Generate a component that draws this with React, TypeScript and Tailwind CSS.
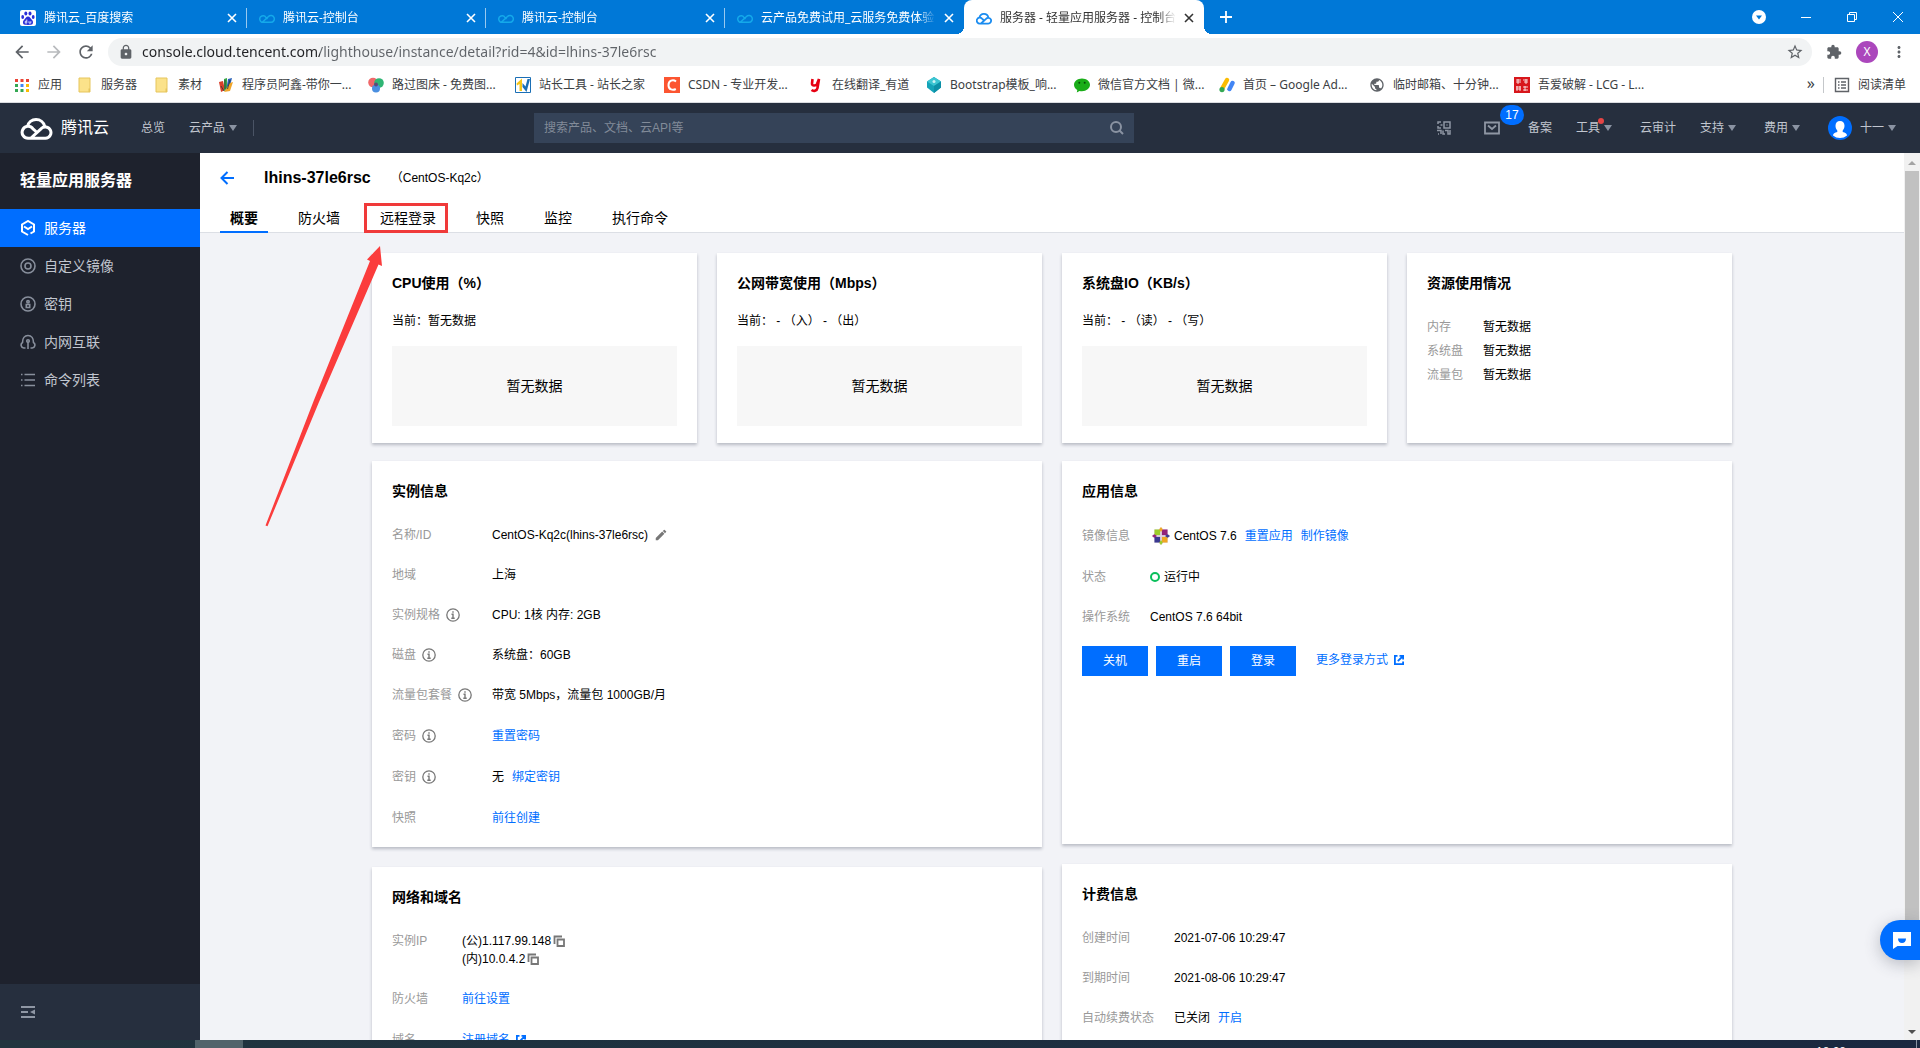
import type { ReactNode } from 'react'
import {
  MdArrowBack,
  MdArrowForward,
  MdEdit,
  MdExtension,
  MdLock,
  MdMoreVert,
  MdPublic,
  MdRefresh,
  MdStarBorder,
} from 'react-icons/md'

/* ---------- icons ---------- */

function CloudLogo({ className }: { className?: string }) {
  return (
    <svg viewBox="0 0 33 24" fill="none" stroke="currentColor" strokeWidth="3" className={className}>
      <path d="M16 15.5l-3-2.7A6 6 0 1 0 8.500 22.300H25.500A5.700 5.700 0 1 0 21 12.800L11 22" strokeLinejoin="round" />
      <path d="M7.500 10.500A8.800 8.800 0 0 1 24.700 10.300" />
    </svg>
  )
}

// same mark, but drawn for a square favicon
function CloudFavicon() {
  return (
    <svg viewBox="0 0 16 16" className="size-4 shrink-0" fill="none" stroke="#1a8cf0" strokeWidth="1.800">
      <path d="M7.500 10L6 8.600A3 3 0 1 0 4 13.600h8.200A2.900 2.900 0 1 0 10 8.800L5 13.500" strokeLinejoin="round" />
      <path d="M3.500 7.500A4.500 4.500 0 0 1 12.300 7.300" />
    </svg>
  )
}

function InfinityIcon() {
  return (
    <svg viewBox="0 0 16 16" className="size-4 shrink-0" fill="none" stroke="#14a9ea" strokeWidth="1.500">
      <path d="M3 12.500L9.500 6.500A3.400 3.400 0 1 1 12 12.300H4.500A3.300 3.300 0 1 1 7 7.500L8.500 9" />
    </svg>
  )
}

function BaiduIcon() {
  return (
    <svg viewBox="0 0 16 16" className="size-4 shrink-0">
      <rect width="16" height="16" rx="2" fill="#fff" />
      <g fill="#2b2fd8">
        <ellipse cx="5.800" cy="3.500" rx="1.500" ry="2" />
        <ellipse cx="10" cy="3.500" rx="1.500" ry="2" />
        <ellipse cx="2.700" cy="7" rx="1.400" ry="1.900" />
        <ellipse cx="13.200" cy="7" rx="1.400" ry="1.900" />
        <path d="M8 6.500c-2 0-2.500 2-4 3.500s-1.500 4.500 1 4.800c1.500.2 4.500.2 6 0 2.500-.3 2.500-3.300 1-4.800S10 6.500 8 6.500z" />
      </g>
      <path d="M6.800 9.500v3.600M6.800 11.200H5.300v1.900h1.500M9 11.200v1.900h1.800v-1.900" stroke="#fff" strokeWidth=".8" fill="none" />
    </svg>
  )
}

function CloseIcon({ className }: { className?: string }) {
  return (
    <svg viewBox="0 0 10 10" className={className} stroke="currentColor" strokeWidth="1.600">
      <path d="M1 1l8 8M9 1L1 9" />
    </svg>
  )
}

function InfoIcon() {
  return (
    <svg viewBox="0 0 14 14" className="size-3.5 shrink-0" fill="none" stroke="#777" strokeWidth="1.300">
      <circle cx="7" cy="7" r="6.200" />
      <path d="M7 3.200v1.600M5.500 6.200H7v4M5.300 10.300h3.400" strokeWidth="1.400" />
    </svg>
  )
}

function CopyIcon() {
  return (
    <svg viewBox="0 0 12 12" className="size-3" fill="none" stroke="#777" strokeWidth="1.800">
      <path d="M1.500 9V1.500H9" />
      <path d="M4.500 4.500h6.500v6.500H4.500z" />
    </svg>
  )
}

function ExternalIcon() {
  return (
    <svg viewBox="0 0 10 10" className="size-2.5" fill="none" stroke="currentColor" strokeWidth="1.800">
      <path d="M3.500 .9H.9v8.200h8.200V6.500" />
      <path d="M3.800 6.200L8.500 1.500M5.500.9h3.600v3.600" />
    </svg>
  )
}

function CentosIcon() {
  return (
    <svg viewBox="0 0 16 16" className="size-[18px]">
      <path d="M8 0l2.200 2.200H14v3.600L16 8l-2 2.200V14h-3.800L8 16l-2.200-2H2v-3.800L0 8l2-2.200V2.200h3.800z" fill="#e2d3e2" />
      <path d="M2.200 2.200h5v5h-5z" fill="#9ccd2a" />
      <path d="M8.800 2.200h5v5h-5z" fill="#932279" />
      <path d="M2.200 8.800h5v5h-5z" fill="#3a3990" />
      <path d="M8.800 8.800h5v5h-5z" fill="#efa724" />
      <path d="M8 0l1.600 2.200L8 4.500 6.400 2.200z" fill="#efa724" />
      <path d="M16 8l-2.200 1.600L11.500 8l2.300-1.600z" fill="#3a3990" />
      <path d="M0 8l2.200-1.600L4.500 8 2.200 9.600z" fill="#932279" />
      <path d="M8 16l-1.600-2.200L8 11.500l1.600 2.300z" fill="#9ccd2a" />
    </svg>
  )
}

function Caret() {
  return (
    <svg viewBox="0 0 8 6" className="w-2 h-1.5" fill="#8a93a2">
      <path d="M0 0h8L4 6z" />
    </svg>
  )
}

function FolderIcon() {
  return (
    <svg viewBox="0 0 16 16" className="size-4">
      <path d="M2 1h11v14H2z" fill="#fbe28a" stroke="#e6c55c" />
      <path d="M11.500 11.500v3.500H13v-3.500z" fill="#e6c55c" />
    </svg>
  )
}

/* ---------- browser chrome ---------- */

const TABS = [
  { title: '腾讯云_百度搜索', icon: <BaiduIcon /> },
  { title: '腾讯云-控制台', icon: <InfinityIcon /> },
  { title: '腾讯云-控制台', icon: <InfinityIcon /> },
  { title: '云产品免费试用_云服务免费体验', icon: <InfinityIcon /> },
]

const BOOKMARKS: { label: string; width: string; icon: ReactNode }[] = [
  {
    label: '应用',
    width: 'w-[63px]',
    icon: (
      <svg viewBox="0 0 16 16" className="size-4">
        <path d="M1 2h3v3H1zM6.500 2h3v3h-3zM12 2h3v3h-3z" fill="#ea4335" />
        <path d="M1 7h3v3H1z" fill="#34a853" />
        <path d="M6.500 7h3v3h-3z" fill="#4285f4" />
        <path d="M12 7h3v3h-3z" fill="#fbbc05" />
        <path d="M1 12h3v3H1zM6.500 12h3v3h-3z" fill="#34a853" />
        <path d="M12 12h3v3h-3z" fill="#fbbc05" />
      </svg>
    ),
  },
  { label: '服务器', width: 'w-[77px]', icon: <FolderIcon /> },
  { label: '素材', width: 'w-16', icon: <FolderIcon /> },
  {
    label: '程序员阿鑫-带你一...',
    width: 'w-[150px]',
    icon: (
      <svg viewBox="0 0 16 16" className="size-4">
        <path d="M1 5l4-1 2 9-4 2z" fill="#d9402b" />
        <path d="M6 2l3-1v11l-3 2z" fill="#3aa648" />
        <path d="M10 2l4-1-3 12-3 1z" fill="#2a62b8" />
        <path d="M12 6l3-1-3 9-6 1z" fill="#f0a52a" />
        <path d="M3 9l3 5M7 3v9M12 3L9.500 12" stroke="#333" strokeWidth=".8" />
      </svg>
    ),
  },
  {
    label: '路过图床 - 免费图...',
    width: 'w-[147px]',
    icon: (
      <svg viewBox="0 0 16 16" className="size-4">
        <circle cx="5" cy="5.500" r="4.800" fill="#f0686a" />
        <circle cx="11" cy="6" r="4.800" fill="#2fb574" />
        <circle cx="8" cy="11.500" r="4" fill="#4a8fe0" />
        <circle cx="8" cy="7.500" r="2" fill="#5b4a7a" />
      </svg>
    ),
  },
  {
    label: '站长工具 - 站长之家',
    width: 'w-[149px]',
    icon: (
      <svg viewBox="0 0 16 16" className="size-4">
        <path d="M.5.500h15v15H.5z" fill="#fff" stroke="#1b6fb5" />
        <path d="M1.500 6.500L7 1.500v12.500H4.500V7L2 8.500z" fill="#f5c518" />
        <path d="M7.500 6l3 3.500L12.500 2h2.500L11.500 15 7.500 10z" fill="#1b6fb5" />
      </svg>
    ),
  },
  {
    label: 'CSDN - 专业开发...',
    width: 'w-36',
    icon: (
      <svg viewBox="0 0 16 16" className="size-4">
        <path d="M0 0h16v16H0z" fill="#fc5531" />
        <path d="M12 4.500C9 2 4.500 3.500 4.500 8.200S9 13.500 11.800 12" stroke="#fff" strokeWidth="2" fill="none" />
      </svg>
    ),
  },
  {
    label: '在线翻译_有道',
    width: 'w-[118px]',
    icon: (
      <svg viewBox="0 0 16 16" className="size-4" fill="none" stroke="#e60012" strokeWidth="2.600">
        <path d="M4.500 2L4 6.500c-.3 2.500 4 2.500 5 .5L11 2 9.500 11c-.5 3-4 3.500-6 2" />
      </svg>
    ),
  },
  {
    label: 'Bootstrap模板_响...',
    width: 'w-[148px]',
    icon: (
      <svg viewBox="0 0 16 16" className="size-4">
        <path d="M8 0l7 4.500v6L8 16l-7-5.500v-6z" fill="#14a3b8" />
        <path d="M8 0l7 4.500L8 9 1 4.500z" fill="#3cc5d2" />
        <path d="M8 9l7-4.500v6L8 16z" fill="#0c8fa6" />
        <circle cx="8" cy="4.500" r="1.500" fill="#c9f2f5" />
      </svg>
    ),
  },
  {
    label: '微信官方文档 | 微...',
    width: 'w-[145px]',
    icon: (
      <svg viewBox="0 0 16 16" className="size-4">
        <path d="M8 1.500c4.400 0 8 2.800 8 6.300s-3.600 6.400-8 6.400c-.8 0-1.700-.1-2.500-.3L2.800 15.500l.5-2.500C1.300 11.800 0 10 0 7.800 0 4.300 3.600 1.500 8 1.500z" fill="#1aad19" />
        <circle cx="5.300" cy="5.800" r="1" fill="#064d06" />
        <circle cx="10.700" cy="5.800" r="1" fill="#064d06" />
      </svg>
    ),
  },
  {
    label: '首页 – Google Ad...',
    width: 'w-[150px]',
    icon: (
      <svg viewBox="0 0 16 16" className="size-4" strokeLinecap="round" strokeWidth="4.400">
        <path d="M8 3L3.500 11" stroke="#fbbc04" />
        <path d="M13.500 6L10.500 12" stroke="#4285f4" />
        <circle cx="3" cy="12.600" r="2.600" fill="#34a853" />
      </svg>
    ),
  },
  { label: '临时邮箱、十分钟...', width: 'w-[145px]', icon: <MdPublic className="size-4 text-[#5f6368]" /> },
  {
    label: '吾爱破解 - LCG - L...',
    width: 'w-[150px]',
    icon: (
      <svg viewBox="0 0 16 16" className="size-4">
        <path d="M0 0h16v16H0z" fill="#d8161b" />
        <path d="M2 3h5M2 5h5M4 2v5M9 3h5M10 5h4M12 2v5M2 10h5M2 12h5M3 9v5M6 9v5M9 10h5M9 13h5M11 9v5" stroke="#fff" strokeWidth=".8" />
      </svg>
    ),
  },
]

function TabStrip() {
  return (
    <div className="flex h-[34px] items-center bg-[#0078d7] pl-2 text-xs text-white">
      {TABS.map((tab, i) => (
        <div key={i} className="relative flex h-full w-[239px] items-center gap-2 pl-3 pr-2.5 pt-0.5">
          {tab.icon}
          <span className="flex-1 overflow-hidden whitespace-nowrap mask-r-from-90%">{tab.title}</span>
          <button aria-label="关闭标签页">
            <CloseIcon className="size-2.5" />
          </button>
          {i < 3 && <span className="absolute right-0 top-2 h-5 w-px bg-white/60" />}
        </div>
      ))}
      <div className="relative flex h-full w-60 items-center gap-2 rounded-t-lg bg-white pl-3 pr-2.5 pt-0.5 text-[#333]">
        <span className="absolute -left-2 bottom-0 size-2 bg-[radial-gradient(circle_at_0_0,transparent_8px,white_8px)]" />
        <span className="absolute -right-2 bottom-0 size-2 bg-[radial-gradient(circle_at_100%_0,transparent_8px,white_8px)]" />
        <CloudFavicon />
        <span className="flex-1 overflow-hidden whitespace-nowrap mask-r-from-90%">服务器 - 轻量应用服务器 - 控制台</span>
        <button aria-label="关闭标签页">
          <CloseIcon className="size-2.5" />
        </button>
      </div>
      <button aria-label="新标签页" className="ml-4">
        <svg viewBox="0 0 12 12" className="size-3" stroke="white" strokeWidth="1.800">
          <path d="M6 0v12M0 6h12" />
        </svg>
      </button>
      <div className="ml-auto flex h-7 items-center gap-[34px] pr-4">
        <button aria-label="搜索标签页">
          <svg viewBox="0 0 14 14" className="size-3.5" fill="none">
            <circle cx="7" cy="7" r="7" fill="#fff" />
            <path d="M4 5.500h6L7 9.500z" fill="#0078d7" />
          </svg>
        </button>
        <button aria-label="最小化">
          <svg viewBox="0 0 12 12" className="size-3" stroke="white">
            <path d="M1 6.500h10" />
          </svg>
        </button>
        <button aria-label="还原">
          <svg viewBox="0 0 12 12" className="size-3" stroke="white" fill="none">
            <path d="M1.500 3.500h7v7h-7zM3.500 3.500v-2h7v7h-2" />
          </svg>
        </button>
        <button aria-label="关闭">
          <svg viewBox="0 0 12 12" className="size-3" stroke="white">
            <path d="M1 1l10 10M11 1L1 11" />
          </svg>
        </button>
      </div>
    </div>
  )
}

function AddressBar() {
  return (
    <div className="flex h-9 items-center bg-white px-3 text-[#5f6368]">
      <button aria-label="后退" className="mr-3">
        <MdArrowBack className="size-5" />
      </button>
      <button aria-label="前进" className="mr-3 text-[#b8babd]">
        <MdArrowForward className="size-5" />
      </button>
      <button aria-label="刷新" className="mr-3">
        <MdRefresh className="size-5" />
      </button>
      <div className="flex h-7 flex-1 items-center gap-2 rounded-full bg-[#f1f3f4] pl-2.5 pr-2">
        <MdLock className="size-4" />
        <input
          aria-label="地址"
          readOnly
          value="console.cloud.tencent.com/lighthouse/instance/detail?rid=4&id=lhins-37le6rsc"
          className="flex-1 bg-[linear-gradient(90deg,#202124_178px,#5f6368_178px)] bg-clip-text text-sm text-transparent outline-none"
        />
        <button aria-label="收藏">
          <MdStarBorder className="size-[18px]" />
        </button>
      </div>
      <button aria-label="扩展程序" className="ml-3.5">
        <MdExtension className="size-4" />
      </button>
      <button className="ml-3.5 size-[22px] rounded-full bg-[#ab47bc] text-xs text-white">X</button>
      <button aria-label="菜单" className="ml-3">
        <MdMoreVert className="size-[18px]" />
      </button>
    </div>
  )
}

function BookmarksBar() {
  return (
    <div className="flex h-[33px] items-center border-b border-[#dadce0] bg-white pl-3.5 pb-0.5 text-xs text-[#3c4043]">
      {BOOKMARKS.map((b) => (
        <a key={b.label} href="#" className={`flex shrink-0 items-center gap-2 whitespace-nowrap ${b.width}`}>
          <span className="shrink-0">{b.icon}</span>
          {b.label}
        </a>
      ))}
      <div className="ml-auto flex items-center pr-3.5">
        <button className="pb-1 text-base leading-4">»</button>
        <span className="ml-2 h-4 w-px bg-[#c4c7ca]" />
        <button className="ml-2.5 flex items-center gap-2">
          <svg viewBox="0 0 16 16" className="size-4" fill="none" stroke="#5f6368" strokeWidth="1.400">
            <path d="M1.500 1.500h13v13h-13zM4 5h1.500M4 8h1.500M4 11h1.500M7 5h5M7 8h5M7 11h5" />
          </svg>
          阅读清单
        </button>
      </div>
    </div>
  )
}

/* ---------- console ---------- */

function ConsoleHeader() {
  return (
    <header className="flex h-[50px] items-center bg-[#262f3e] pl-5 pr-6 text-xs text-[#c1c6cf]">
      <CloudLogo className="w-[33px] h-6 text-white" />
      <span className="ml-2 text-base text-white">腾讯云</span>
      <a href="#" className="ml-8">总览</a>
      <a href="#" className="ml-6 flex items-center gap-1">
        云产品
        <Caret />
      </a>
      <span className="ml-4 h-4 w-px bg-[#4a5465]" />
      <div className="ml-[280px] flex h-[30px] w-[600px] items-center bg-[#354358] px-2.5">
        <input
          aria-label="搜索"
          placeholder="搜索产品、文档、云API等"
          className="flex-1 bg-transparent outline-none placeholder:text-[#828b99]"
        />
        <button aria-label="搜索">
          <svg viewBox="0 0 14 14" className="size-3.5" fill="none" stroke="#8a93a2" strokeWidth="2">
            <circle cx="6" cy="6" r="5" />
            <path d="M9.500 9.500L13 13" />
          </svg>
        </button>
      </div>
      <div className="ml-auto flex items-center">
        <button aria-label="二维码">
          <svg viewBox="0 0 14 14" className="size-3.5" fill="none" stroke="#8f97a4" strokeWidth="1.500">
            <path d="M7 1h6v6H7zM9.500 4h1M1 3V1h3M1 5v2h3M3.500 4h2M0 9.500h4v3.500M1 13h1M6 9.500v3.500h2M8 9.500h3V13h2V9" />
          </svg>
        </button>
        <button aria-label="消息" className="relative ml-[33px]">
          <svg viewBox="0 0 16 14" className="w-4 h-3.5" fill="none" stroke="#8f97a4" strokeWidth="1.800">
            <path d="M1 1.500h14v11H1zM4 4.500L8 8l4-3.500" />
          </svg>
          <span className="absolute -top-4 left-4 flex h-5 w-6 items-center justify-center rounded-full bg-[#006eff] text-xs text-white">
            17
          </span>
        </button>
        <a href="#" className="ml-7">备案</a>
        <a href="#" className="relative ml-6 flex items-center gap-1">
          工具
          <Caret />
          <span className="absolute right-2 -top-0.5 size-1.5 rounded-full bg-[#e54545]" />
        </a>
        <a href="#" className="ml-7">云审计</a>
        <a href="#" className="ml-6 flex items-center gap-1">
          支持
          <Caret />
        </a>
        <a href="#" className="ml-7 flex items-center gap-1">
          费用
          <Caret />
        </a>
        <svg viewBox="0 0 24 24" className="ml-7 size-6">
          <circle cx="12" cy="12" r="12" fill="#006eff" />
          <path d="M12 5c2.800 0 4.500 2 4.500 4.800 0 2-.8 3.600-1.800 4.700v1.500c2.500.6 4.300 1.500 4.300 3.500a11 11 0 0 1-14 0c0-2 1.800-2.900 4.300-3.500v-1.500c-1-1.100-1.800-2.700-1.800-4.700C7.500 7 9.200 5 12 5z" fill="#fff" />
        </svg>
        <button className="ml-2 flex items-center gap-1">
          十一
          <Caret />
        </button>
      </div>
    </header>
  )
}

const NAV: { label: string; icon: ReactNode }[] = [
  {
    label: '服务器',
    icon: (
      <>
        <path d="M8 15l-6-3.500v-7L8 1l6 3.500v7L10.500 13.500" strokeWidth="2" />
        <path d="M4 6.500L8 9l4-2.500" strokeWidth="2" />
      </>
    ),
  },
  {
    label: '自定义镜像',
    icon: (
      <>
        <circle cx="8" cy="8" r="7" />
        <circle cx="8" cy="8" r="3" />
      </>
    ),
  },
  {
    label: '密钥',
    icon: (
      <>
        <circle cx="8" cy="8" r="7" />
        <circle cx="8" cy="5.800" r="1.200" />
        <path d="M6.300 8.500h3.400v3H6.300z" />
      </>
    ),
  },
  {
    label: '内网互联',
    icon: (
      <>
        <path d="M5.500 14H3.800A3 3 0 0 1 2.500 8.500C2.500 4.500 4.500 1.500 8 1.500s5.500 3 5.500 7A3 3 0 0 1 12.200 14H10.500" />
        <path d="M8 7.500V15" />
        <circle cx="8" cy="7" r="1.300" />
      </>
    ),
  },
  {
    label: '命令列表',
    icon: <path d="M1 2.500h1.500M1 8h1.500M1 13.500h1.500M4.500 2.500H15M4.500 8H15M4.500 13.500H15" />,
  },
]

function Sidebar() {
  return (
    <aside className="flex w-[200px] shrink-0 flex-col bg-[#1e222d] text-sm text-[#c1c6cf]">
      <h2 className="px-5 py-4 text-base leading-6 font-bold text-white">轻量应用服务器</h2>
      <nav>
        {NAV.map((item, i) => (
          <a
            key={item.label}
            href="#"
            className={`flex h-[38px] items-center gap-2 px-5 ${i === 0 ? 'bg-[#006eff] text-white' : ''}`}
          >
            <svg
              viewBox="0 0 16 16"
              className={`size-4 ${i === 0 ? 'text-white' : 'text-[#888f9c]'}`}
              fill="none"
              stroke="currentColor"
              strokeWidth="1.600"
            >
              {item.icon}
            </svg>
            {item.label}
          </a>
        ))}
      </nav>
      <div className="mt-auto flex h-14 items-center bg-[#262f3e] px-5">
        <button aria-label="收起菜单">
          <svg viewBox="0 0 16 14" className="w-4 h-3.5" fill="#8f97a4">
            <path d="M1 1h14v2H1zM1 6h7v2H1zM1 11h14v2H1zM15 4.500v5L10 7z" />
          </svg>
        </button>
      </div>
    </aside>
  )
}

function Card({ title, className = '', children }: { title: string; className?: string; children: ReactNode }) {
  return (
    <section className={`bg-white px-5 pt-5 shadow-[0_2px_3px_rgba(54,58,80,0.3)] ${className}`}>
      <h3 className="text-sm leading-5 font-bold text-black">{title}</h3>
      {children}
    </section>
  )
}

function Row({
  label,
  info,
  labelWidth,
  height = 'h-5',
  children,
}: {
  label: string
  info?: boolean
  labelWidth: string
  height?: string
  children: ReactNode
}) {
  return (
    <div className={`flex leading-5 ${height}`}>
      <dt className={`flex shrink-0 items-center gap-1.5 text-[#999] ${labelWidth}`}>
        {label}
        {info && <InfoIcon />}
      </dt>
      <dd className="flex items-center">{children}</dd>
    </div>
  )
}

function Link({ className = '', children }: { className?: string; children: ReactNode }) {
  return (
    <a href="#" className={`text-[#006eff] ${className}`}>
      {children}
    </a>
  )
}

const METRICS = [
  { title: 'CPU使用（%）', current: '当前：暂无数据' },
  { title: '公网带宽使用（Mbps）', current: '当前： - （入） - （出）' },
  { title: '系统盘IO（KB/s）', current: '当前： - （读） - （写）' },
]

const DETAIL_TABS = ['概要', '防火墙', '远程登录', '快照', '监控', '执行命令']

function DetailHeader() {
  return (
    <div className="h-20 border-b border-[#dcdfe5] bg-white px-5">
      <div className="flex h-12 items-center pt-0.5">
        <button aria-label="返回" className="text-[#006eff]">
          <svg viewBox="0 0 14 14" className="size-3.5" fill="none" stroke="currentColor" strokeWidth="2">
            <path d="M7.500 1L1.500 7l6 6M1.500 7H14" />
          </svg>
        </button>
        <h1 className="ml-[30px] text-base font-bold">lhins-37le6rsc</h1>
        <span className="ml-5 text-xs">（CentOS-Kq2c）</span>
      </div>
      <div className="flex h-8 gap-5 text-sm" role="tablist">
        {DETAIL_TABS.map((tab, i) => (
          <button
            key={tab}
            role="tab"
            aria-selected={i === 0}
            className={`relative border-b-2 px-2.5 pt-1 ${i === 0 ? 'border-[#006eff] font-bold' : 'border-transparent'}`}
          >
            {tab}
            {i === 2 && <span className="absolute -left-1.5 -right-0.5 top-0.5 -bottom-0.5 border-3 border-[#f03a3a]" />}
          </button>
        ))}
      </div>
    </div>
  )
}

function Overview() {
  return (
    <div className="mx-auto max-w-[1360px] pt-5 text-xs">
      <div className="grid grid-cols-4 gap-5">
        {METRICS.map((m) => (
          <Card key={m.title} title={m.title} className="h-[190px]">
            <p className="mt-[18px] leading-5 whitespace-pre">{m.current}</p>
            <div className="mt-[15px] flex h-20 items-center justify-center bg-[#f7f7f7] text-sm">暂无数据</div>
          </Card>
        ))}
        <Card title="资源使用情况" className="h-[190px]">
          <dl className="mt-6 space-y-1">
            {['内存', '系统盘', '流量包'].map((label) => (
              <Row key={label} label={label} labelWidth="w-14">
                暂无数据
              </Row>
            ))}
          </dl>
        </Card>
      </div>

      <div className="mt-[18px] grid grid-cols-2 items-start gap-5">
        <div className="space-y-5">
          <Card title="实例信息" className="pb-[19px]">
            <dl className="mt-6 space-y-5">
              <Row label="名称/ID" labelWidth="w-[100px]">
                CentOS-Kq2c(lhins-37le6rsc)
                <button aria-label="编辑名称" className="ml-1.5">
                  <MdEdit className="size-3.5 text-[#777]" />
                </button>
              </Row>
              <Row label="地域" labelWidth="w-[100px]">上海</Row>
              <Row label="实例规格" info labelWidth="w-[100px]">CPU: 1核 内存: 2GB</Row>
              <Row label="磁盘" info labelWidth="w-[100px]">系统盘：60GB</Row>
              <Row label="流量包套餐" info labelWidth="w-[100px]">带宽 5Mbps，流量包 1000GB/月</Row>
              <Row label="密码" info labelWidth="w-[100px]" height="h-[21px]">
                <Link>重置密码</Link>
              </Row>
              <Row label="密钥" info labelWidth="w-[100px]" height="h-[21px]">
                无<Link className="ml-2">绑定密钥</Link>
              </Row>
              <Row label="快照" labelWidth="w-[100px]" height="h-[21px]">
                <Link>前往创建</Link>
              </Row>
            </dl>
          </Card>
          <Card title="网络和域名" className="pb-5">
            <dl className="mt-[25px] space-y-5">
              <div className="flex leading-[18px]">
                <dt className="w-[70px] text-[#999]">实例IP</dt>
                <dd>
                  {['(公)1.117.99.148', '(内)10.0.4.2'].map((ip) => (
                    <div key={ip} className="flex items-center gap-0.5">
                      {ip}
                      <button aria-label="复制">
                        <CopyIcon />
                      </button>
                    </div>
                  ))}
                </dd>
              </div>
              <Row label="防火墙" labelWidth="w-[70px]" height="h-[21px]">
                <Link>前往设置</Link>
              </Row>
              <Row label="域名" labelWidth="w-[70px]" height="h-[21px]">
                <Link className="flex items-center gap-1.5">
                  注册域名 <ExternalIcon />
                </Link>
              </Row>
            </dl>
          </Card>
        </div>

        <div className="space-y-5">
          <Card title="应用信息" className="min-h-[383px]">
            <dl className="mt-6 space-y-5">
              <Row label="镜像信息" labelWidth="w-[68px]" height="h-[22px]">
                <span className="mr-1 ml-0.5">
                  <CentosIcon />
                </span>
                CentOS 7.6
                <Link className="ml-2">重置应用</Link>
                <Link className="ml-2">制作镜像</Link>
              </Row>
              <Row label="状态" labelWidth="w-[68px]">
                <span className="mr-1 size-2.5 rounded-full border-2 border-[#0abf5b]" />
                运行中
              </Row>
              <Row label="操作系统" labelWidth="w-[68px]">CentOS 7.6 64bit</Row>
            </dl>
            <div className="mt-[19px] flex gap-2">
              {['关机', '重启', '登录'].map((label) => (
                <button key={label} className="h-[30px] w-[66px] bg-[#006eff] text-white">
                  {label}
                </button>
              ))}
              <Link className="ml-3 flex h-7 items-center gap-1.5">
                更多登录方式 <ExternalIcon />
              </Link>
            </div>
          </Card>
          <Card title="计费信息" className="pb-5">
            <dl className="mt-6 space-y-5">
              <Row label="创建时间" labelWidth="w-[92px]">2021-07-06 10:29:47</Row>
              <Row label="到期时间" labelWidth="w-[92px]">2021-08-06 10:29:47</Row>
              <Row label="自动续费状态" labelWidth="w-[92px]">
                已关闭<Link className="ml-2">开启</Link>
              </Row>
            </dl>
          </Card>
        </div>
      </div>
    </div>
  )
}

function Scrollbar() {
  return (
    <div className="flex w-4 shrink-0 flex-col items-center bg-[#f1f1f1] py-1.5">
      <svg viewBox="0 0 8 4" className="w-2 h-1 my-0.5" fill="#a3a3a3">
        <path d="M0 4h8L4 0z" />
      </svg>
      <div className="mt-1 h-[780px] w-3.5 bg-[#c1c1c1]" />
      <svg viewBox="0 0 8 4" className="mt-auto w-2 h-1" fill="#505050">
        <path d="M0 0h8L4 4z" />
      </svg>
    </div>
  )
}

export default function App() {
  return (
    <div className="flex h-screen flex-col overflow-hidden bg-white font-['Liberation_Sans','Noto_Sans_CJK_SC',sans-serif] text-black">
      <div className="font-['Noto_Sans','Noto_Sans_CJK_SC',sans-serif]">
        <TabStrip />
        <AddressBar />
        <BookmarksBar />
      </div>
      <ConsoleHeader />
      <div className="relative flex min-h-0 flex-1">
        <Sidebar />
        <main className="relative min-w-0 flex-1 overflow-hidden bg-[#f2f3f7]">
          <DetailHeader />
          <Overview />
          {/* arrow pointing at the remote login tab */}
          <svg viewBox="0 0 120 284" className="absolute left-16 top-[92px] w-[120px] h-[284px]" fill="#fb3c3c">
            <path d="M116 1L103 14.500l3 1.500L50 155 1.500 280.500l2 .8L55 157 114.500 19.500l3.500 1.500z" />
          </svg>
        </main>
        <Scrollbar />
        <button
          aria-label="在线客服"
          className="absolute right-0 bottom-20 flex h-10 w-10 items-center justify-center rounded-l-full bg-[#006eff] pl-1 shadow-[0_4px_16px_rgba(54,58,80,0.3)]"
        >
          <svg viewBox="0 0 18 17" className="w-[18px] h-[17px]">
            <path d="M0 0h18v14H4.500L0 17z" fill="#fff" />
            <path d="M5 6.500h8c0 3-1.800 4.500-4 4.500s-4-1.500-4-4.500z" fill="#006eff" />
          </svg>
        </button>
      </div>
      <footer className="flex h-2 shrink-0 overflow-hidden bg-linear-to-r from-[#21363f] to-[#1a2840] text-xs leading-4 text-white">
        <span className="ml-[195px] h-2 w-12 bg-[#51646b]" />
        <span className="mt-1 ml-auto pr-[70px]">18:28</span>
        <span className="mr-[3px] h-2 w-px bg-[#8a94a3]" />
      </footer>
    </div>
  )
}
